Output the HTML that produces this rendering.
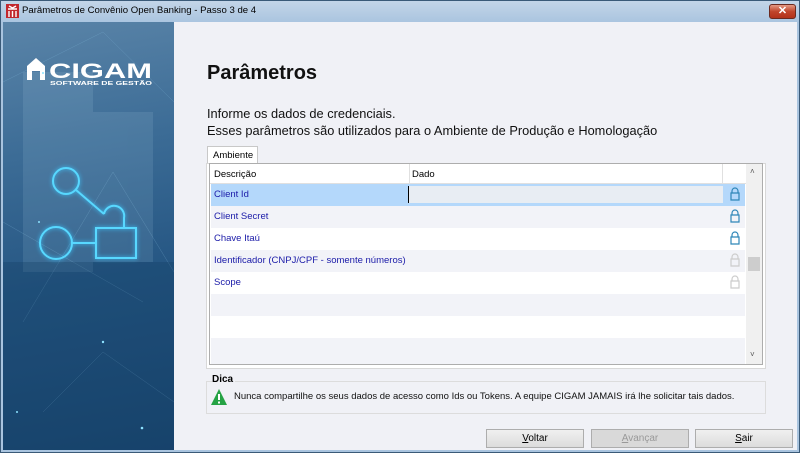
<!DOCTYPE html><html><head><meta charset="utf-8"><style>
*{margin:0;padding:0;box-sizing:border-box}
body{width:800px;height:453px;overflow:hidden;font-family:"Liberation Sans",sans-serif;background:#1d6e80;position:relative}
.win{position:absolute;left:0;top:0;width:800px;height:453px;background:linear-gradient(#c3d5e8,#a9c4df 22px);border:1px solid #3a5a78}
.title{position:absolute;left:22px;top:5px;font-size:9.6px;color:#000}
.close{position:absolute;left:769px;top:4px;width:27px;height:15px;border-radius:3px;background:linear-gradient(#e59a84,#c0452b 50%,#b2321a);border:1px solid #6b2a20;color:#fff;font-size:11px;font-weight:bold;text-align:center;line-height:13px}
.client{position:absolute;left:3px;top:22px;width:794px;height:428px;background:#f0f1f6}
.left{position:absolute;left:3px;top:22px;width:171px;height:428px;background:linear-gradient(170deg,#5a84a8 0%,#3c6c96 30%,#255683 60%,#1a4670 100%);overflow:hidden}
.t{position:absolute;white-space:nowrap}
.grid{position:absolute;left:209px;top:163px;width:554px;height:202px;background:#fff;border:1px solid #adadad}
.row{position:absolute;left:1px;width:534px;height:22px;font-size:9.5px;color:#1a1aa8;padding:5px 0 0 3px}
.btn{position:absolute;top:429px;width:98px;height:19px;border:1px solid #adadad;background:linear-gradient(#f0f0f0,#dcdcdc);font-size:10px;text-align:center;line-height:17px}
</style></head><body>
<div class="win"></div>
<svg style="position:absolute;left:6px;top:4px" width="13" height="14"><rect width="13" height="14" fill="#c1272d"/><path d="M2 5h9M3 7v6M6.5 7v6M10 7v6M3 2l3.5 2 3.5-2" stroke="#fff" stroke-width="1.4" fill="none"/></svg>
<div class="title">Parâmetros de Convênio Open Banking - Passo 3 de 4</div>
<div class="close">✕</div>
<div class="client"></div>
<div class="left">
<svg width="171" height="428" style="position:absolute;left:0;top:0">
<g stroke="#7fb5d8" stroke-width="0.4" opacity="0.5" fill="none"><path d="M0 60L100 10 171 80M20 300L110 150 171 250M40 390L100 330 171 380M0 200L140 280"/></g>
<g opacity="0.12" fill="#bde"><rect x="20" y="50" width="70" height="200"/><rect x="90" y="90" width="60" height="150"/></g>
<rect x="0" y="240" width="171" height="188" fill="#123a60" opacity="0.3"/>
<path d="M24 58V44l9-8 9 8v14h-5v-9h-8v9z" fill="#fff"/>
<text x="46" y="56" fill="#fff" font-family="Liberation Sans" font-weight="bold" font-size="21" textLength="103" lengthAdjust="spacingAndGlyphs">CIGAM</text>
<text x="47" y="63" fill="#fff" font-size="5" font-weight="bold" textLength="102" lengthAdjust="spacingAndGlyphs">SOFTWARE DE GESTÃO</text>
<g stroke="#58d8ff" stroke-width="2" fill="none" style="filter:drop-shadow(0 0 2px #3cc8ff)">
<circle cx="63" cy="159" r="13"/><path d="M73 168L101 192"/><path d="M101 192a10 10 0 0 1 20 4v10"/>
<circle cx="53" cy="221" r="16"/><path d="M69 221H93"/><rect x="93" y="206" width="40" height="30"/>
</g>
<g fill="#8de2ff"><circle cx="40" cy="51" r="1"/><circle cx="100" cy="320" r="1.2"/><circle cx="139" cy="406" r="1.3"/><circle cx="14" cy="390" r="1"/><circle cx="36" cy="200" r="1"/></g>
</svg></div>
<div class="t" style="left:207px;top:62px;font-size:20px;font-weight:bold;color:#111">Parâmetros</div>
<div class="t" style="left:207px;top:106px;font-size:12.8px;color:#111">Informe os dados de credenciais.</div>
<div class="t" style="left:207px;top:123px;font-size:12.8px;color:#111">Esses parâmetros são utilizados para o Ambiente de Produção e Homologação</div>
<div style="position:absolute;left:207px;top:146px;width:51px;height:18px;background:#fff;border:1px solid #c8c8c8;border-bottom:none;font-size:9.5px;padding:3px 0 0 5px">Ambiente</div>
<div style="position:absolute;left:206px;top:163px;width:560px;height:206px;border:1px solid #d8d8d8;background:#fff"></div>
<div class="grid">
<div style="position:absolute;left:0;top:0;width:536px;height:20px;border-bottom:1px solid #e0e0e0;font-size:9.5px;padding:5px 0 0 4px">Descrição<span style="position:absolute;left:199px;top:0;height:20px;border-left:1px solid #e0e0e0;padding:5px 0 0 2px">Dado</span><span style="position:absolute;left:512px;top:0;height:20px;border-left:1px solid #e0e0e0"></span></div>
<div class="row" style="top:20px;background:#b4d8fb">Client Id<div style="position:absolute;left:197px;top:2px;width:315px;height:17px;background:#e8edf3;border-left:1px solid #000"></div></div>
<div class="row" style="top:42px;background:#f2f3f8">Client Secret</div>
<div class="row" style="top:64px;background:#fff">Chave Itaú</div>
<div class="row" style="top:86px;background:#f2f3f8">Identificador (CNPJ/CPF - somente números)</div>
<div class="row" style="top:108px;background:#fff">Scope</div>
<div class="row" style="top:130px;background:#f2f3f8"></div>
<div class="row" style="top:152px;background:#fff"></div>
<div class="row" style="top:174px;background:#f2f3f8;height:26px"></div>
<svg style="position:absolute;left:519px;top:22px" width="12" height="110"><g fill="none" stroke-width="1.2">
<path d="M3 7V5a3 3 0 0 1 6 0v2M2 7h8v7H2z" stroke="#2e86b8"/>
<path d="M3 29V27a3 3 0 0 1 6 0v2M2 29h8v7H2z" stroke="#2e86b8"/>
<path d="M3 51V49a3 3 0 0 1 6 0v2M2 51h8v7H2z" stroke="#2e86b8"/>
<path d="M3 73V71a3 3 0 0 1 6 0v2M2 73h8v7H2z" stroke="#ccc"/>
<path d="M3 95V93a3 3 0 0 1 6 0v2M2 95h8v7H2z" stroke="#ccc"/></g></svg>
<div style="position:absolute;left:536px;top:0;width:16px;height:200px;background:#f0f0f0"><div style="position:absolute;top:3px;left:4px;font-size:8px;color:#555">˄</div><div style="position:absolute;top:93px;left:2px;width:12px;height:14px;background:#cdcdcd"></div><div style="position:absolute;top:186px;left:4px;font-size:8px;color:#555">˅</div></div>
</div>
<div style="position:absolute;left:206px;top:381px;width:560px;height:33px;border:1px solid #dcdcdc"></div>
<div class="t" style="left:212px;top:374px;font-size:10px;font-weight:bold;background:#f0f1f6;padding-right:2px">Dica</div>
<svg style="position:absolute;left:210px;top:388px" width="18" height="18"><path d="M9 1L17 17H1z" fill="#25a244"/><rect x="8" y="6" width="2" height="6" fill="#fff"/><rect x="8" y="13.5" width="2" height="2" fill="#fff"/></svg>
<div class="t" style="left:234px;top:391px;font-size:9.5px;color:#111">Nunca compartilhe os seus dados de acesso como Ids ou Tokens. A equipe CIGAM JAMAIS irá lhe solicitar tais dados.</div>
<div class="btn" style="left:486px"><u>V</u>oltar</div>
<div class="btn" style="left:591px;color:#999;background:#d9d9d9"><u>A</u>vançar</div>
<div class="btn" style="left:695px"><u>S</u>air</div>
</body></html>
